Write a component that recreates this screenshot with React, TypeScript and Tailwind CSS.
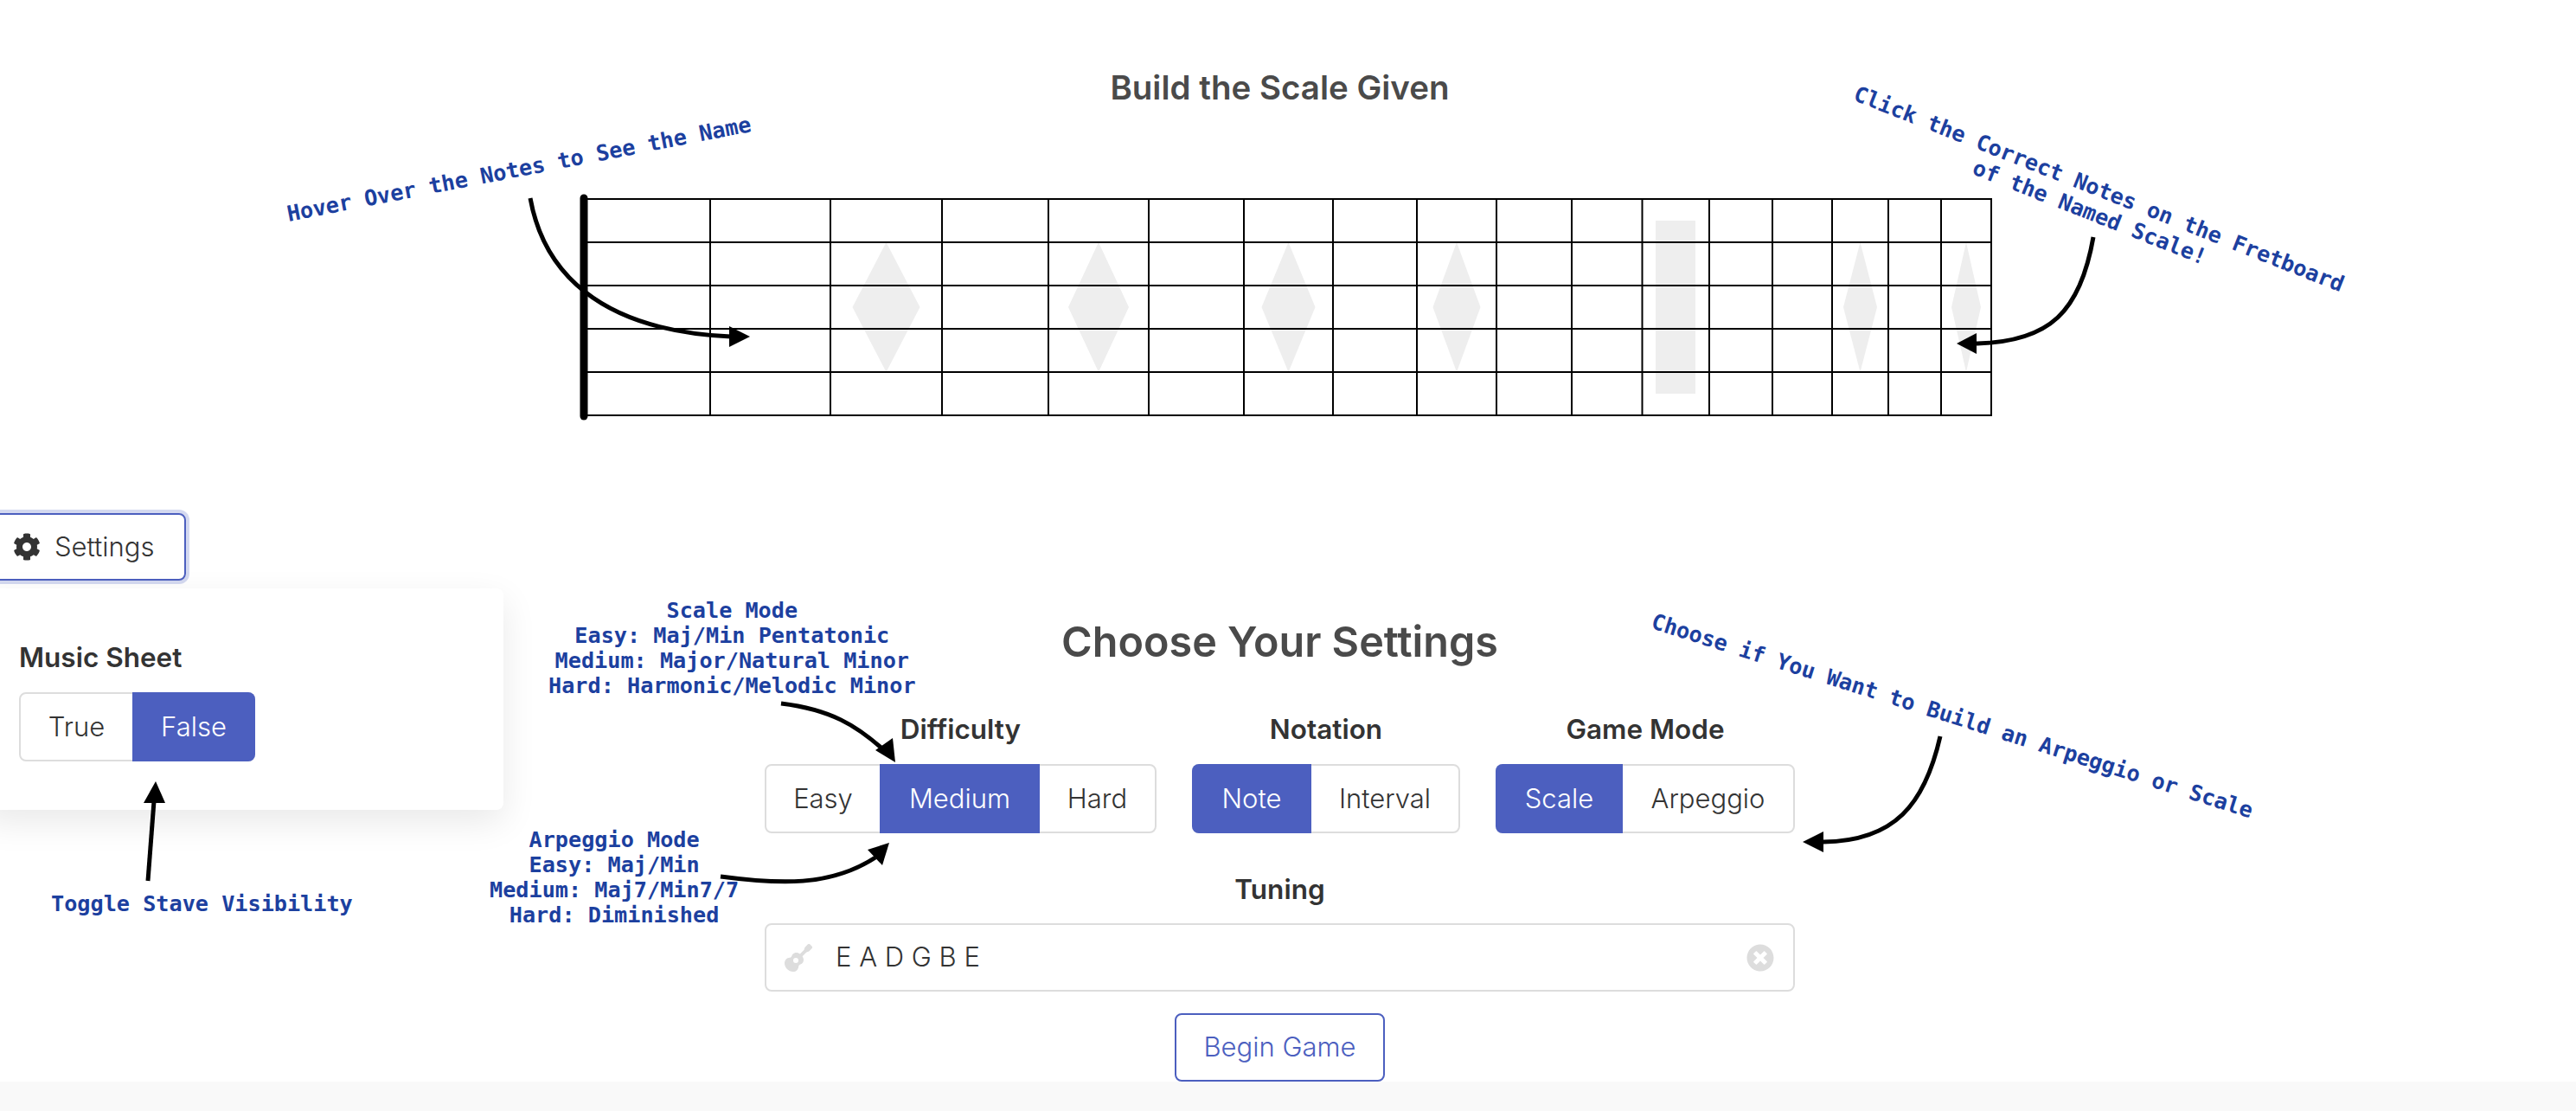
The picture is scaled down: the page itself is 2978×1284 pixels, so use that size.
import { FaCog, FaGuitar, FaTimesCircle } from 'react-icons/fa'

const frets = [821, 960, 1089, 1212, 1328, 1438, 1541, 1638, 1730, 1817, 1898.5, 1976, 2049, 2118, 2183, 2244, 2302]
const strings = [230, 280, 330, 380, 430, 480]
const inlays = [
  { x: 1024.5, w: 39 },
  { x: 1270, w: 35 },
  { x: 1489.5, w: 31 },
  { x: 1684, w: 27.5 },
  { x: 2150.5, w: 19.5 },
  { x: 2273, w: 17 },
]

const arrows = [
  { d: 'M613 229 C 628 312, 690 382, 845 389', head: '867,389 843,377 843,401' },
  { d: 'M2420 274 C 2405 360, 2370 395, 2285 397', head: '2262,397 2285,385 2285,409' },
  { d: 'M171 1018 L 178 926', head: '180,903 166,928 191,928' },
  { d: 'M903 813 C 960 820, 990 838, 1023 868', head: '1035,881 1012,867 1032,853' },
  { d: 'M833 1013 C 900 1022, 960 1025, 1012 991', head: '1028,974 1003,982 1020,1000' },
  { d: 'M2243 851 C 2225 930, 2190 972, 2108 973', head: '2084,973 2108,961 2108,985' },
]

type Option = { label: string; w: string }

const difficulty: Option[] = [
  { label: 'Easy', w: 'w-[131px]' },
  { label: 'Medium', w: 'w-[185px]' },
  { label: 'Hard', w: 'w-[133px]' },
]
const notation: Option[] = [
  { label: 'Note', w: 'w-[138px]' },
  { label: 'Interval', w: 'w-[170px]' },
]
const gameMode: Option[] = [
  { label: 'Scale', w: 'w-[147px]' },
  { label: 'Arpeggio', w: 'w-[197px]' },
]
const musicSheet: Option[] = [
  { label: 'True', w: 'w-[129px]' },
  { label: 'False', w: 'w-[142px]' },
]

function Segmented({ options, active }: { options: Option[]; active: string }) {
  return (
    <div className="flex h-[80px] rounded-lg border-2 border-[#dddddd] bg-white font-[350]">
      {options.map((o) => (
        <div
          key={o.label}
          className={
            o.label === active
              ? `relative -my-[2px] flex items-center justify-center bg-[#4c5fbf] text-white first:-ml-[2px] first:rounded-l-lg last:-mr-[2px] last:rounded-r-lg ${o.w}`
              : `flex items-center justify-center text-[#333333] ${o.w}`
          }
        >
          {o.label}
        </div>
      ))}
    </div>
  )
}

function Group({ label, options, active }: { label: string; options: Option[]; active: string }) {
  return (
    <div className="flex flex-col items-center">
      <div className="mb-[20px] h-[40px] text-[31.5px] leading-[40px] font-semibold text-[#333333]">{label}</div>
      <Segmented options={options} active={active} />
    </div>
  )
}

function Note({ className, children }: { className: string; children: string }) {
  return (
    <div className={`absolute whitespace-pre text-center font-['DejaVu_Sans_Mono',monospace] text-[25.2px] leading-[29px] font-bold text-[#1c409f] ${className}`}>
      {children}
    </div>
  )
}

export default function App() {
  return (
    <div className="relative h-[1284px] w-full overflow-hidden bg-white font-['Inter',sans-serif] text-[31px]">
      <div className="flex h-[1250px] w-[2959px] flex-col items-center pt-[76px]">
        <h1 className="h-[50px] text-[38.5px] leading-[50px] font-semibold text-[#4a4a4a]">Build the Scale Given</h1>

        <svg className="mt-[96px] ml-[670px] h-[266px] w-[1640px] shrink-0 self-start" viewBox="670 222 1640 266">
          {inlays.map((n) => (
            <polygon key={n.x} points={`${n.x},280 ${n.x + n.w},355 ${n.x},430 ${n.x - n.w},355`} fill="#eeeeee" />
          ))}
          <rect x="1914" y="255" width="46" height="200" fill="#eeeeee" />
          {strings.map((y) => (
            <line key={y} x1="675" x2="2303" y1={y} y2={y} stroke="#000" strokeWidth="2" />
          ))}
          {frets.map((x) => (
            <line key={x} x1={x} x2={x} y1="230" y2="480" stroke="#000" strokeWidth="2" />
          ))}
          <line x1="675" x2="675" y1="229" y2="481" stroke="#000" strokeWidth="9" strokeLinecap="round" />
        </svg>

        <h2 className="mt-[224px] h-[60px] text-[48.5px] leading-[60px] font-semibold text-[#4a4a4a]">Choose Your Settings</h2>

        <div className="mt-[51px] flex gap-[41px]">
          <Group label="Difficulty" options={difficulty} active="Medium" />
          <Group label="Notation" options={notation} active="Note" />
          <Group label="Game Mode" options={gameMode} active="Scale" />
        </div>

        <div className="mt-[45px] h-[40px] text-[31.5px] leading-[40px] font-semibold text-[#333333]">Tuning</div>
        <div className="mt-[19px] flex h-[79px] w-[1191px] items-center rounded-lg border-2 border-[#dddddd] bg-white pr-[22px] pl-[20px] font-[350]">
          <FaGuitar className="h-[32px] w-[34px] text-[#dddddd]" />
          <span className="ml-[26px] flex-1 text-[#333333]">E A D G B E</span>
          <FaTimesCircle className="h-[32px] w-[32px] text-[#dddddd]" />
        </div>

        <button className="mt-[25px] flex h-[79px] w-[243px] shrink-0 items-center justify-center rounded-lg border-2 border-[#4c5fbf] font-[350] text-[#4c5fbf]">
          Begin Game
        </button>
      </div>

      <div className="h-[34px] w-full bg-[#f9f9f9]" />

      {/* settings dropdown, partly pushed off the left edge */}
      <div className="absolute top-[593px] -left-[20px]">
        <button className="flex h-[78px] w-[235px] items-center rounded-lg border-2 border-[#4c5fbf] pl-[33px] font-[350] text-[#333333] shadow-[0_0_0_4px_#d4d9f0]">
          <FaCog className="h-[32px] w-[32px] text-[#333333]" />
          <span className="ml-[16px]">Settings</span>
        </button>
        <div className="mt-[9px] h-[256px] w-[602px] rounded-lg bg-white pt-[50px] pl-[42px] shadow-[0_14px_40px_rgba(0,0,0,0.09)]">
          <div className="mt-[10px] mb-[20px] h-[40px] text-[31.5px] leading-[40px] font-semibold text-[#333333]">Music Sheet</div>
          <div className="inline-flex">
            <Segmented options={musicSheet} active="False" />
          </div>
        </div>
      </div>

      <Note className="top-[181px] left-[327px] -rotate-[11deg]">Hover Over the Notes to See the Name</Note>
      <Note className="top-[203px] left-[2118px] rotate-[21.5deg]">{'Click the Correct Notes on the Fretboard\nof the Named Scale!'}</Note>
      <Note className="top-[813px] left-[1893px] rotate-[17.6deg]">Choose if You Want to Build an Arpeggio or Scale</Note>
      <Note className="top-[691px] left-[634px]">{'Scale Mode\nEasy: Maj/Min Pentatonic\nMedium: Major/Natural Minor\nHard: Harmonic/Melodic Minor'}</Note>
      <Note className="top-[956px] left-[566px]">{'Arpeggio Mode\nEasy: Maj/Min\nMedium: Maj7/Min7/7\nHard: Diminished'}</Note>
      <Note className="top-[1030px] left-[59px]">Toggle Stave Visibility</Note>

      <svg className="pointer-events-none absolute top-0 left-0 h-[1284px] w-[2978px]" viewBox="0 0 2978 1284">
        {arrows.map((a) => (
          <g key={a.head}>
            <path d={a.d} fill="none" stroke="#000" strokeWidth="5" />
            <polygon points={a.head} fill="#000" />
          </g>
        ))}
      </svg>
    </div>
  )
}
